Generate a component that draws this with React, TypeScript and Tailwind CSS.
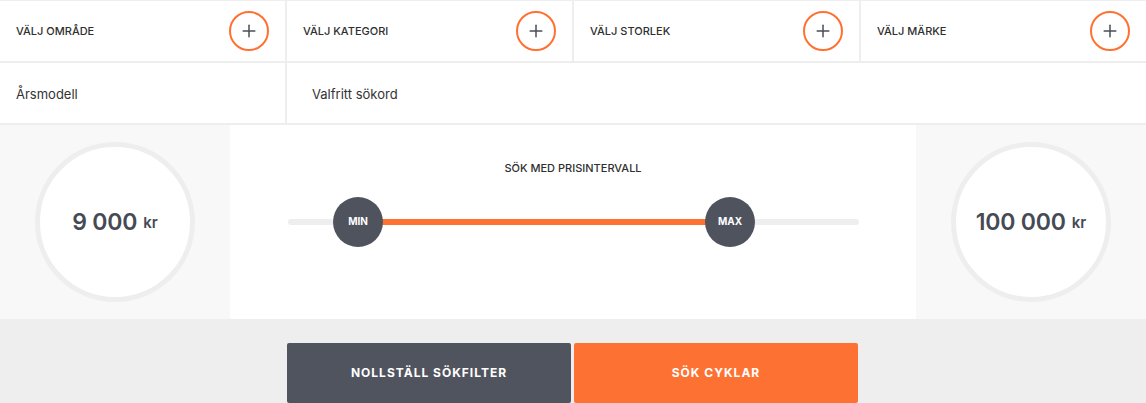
import { Plus } from 'lucide-react';

const filters = ['Välj område', 'Välj kategori', 'Välj storlek', 'Välj märke'];

function PriceCircle({ value }: { value: string }) {
  return (
    <div className="w-[230px] bg-[#f8f8f8] flex items-center justify-center">
      <div className="w-[160px] h-[160px] rounded-full bg-white border-[5px] border-[#eeeeee] flex items-center justify-center">
        <span className="text-[23px] font-semibold text-[#464a54] tracking-[-0.2px]">{value}</span>
        <span className="text-[15px] font-semibold text-[#464a54] ml-[6px] mt-[3px]">kr</span>
      </div>
    </div>
  );
}

export default function App() {
  return (
    <div className="w-[1146px] h-[403px] overflow-hidden bg-white font-['Inter',sans-serif] text-[#333]">
      <div className="border-t border-[#eeeeee] flex border-b-2">
        {filters.map((f, i) => (
          <div
            key={f}
            className={
              i < 3
                ? 'w-[287px] h-[60px] border-r-2 border-[#eeeeee] flex items-center justify-between pl-4 pr-4'
                : 'flex-1 h-[60px] flex items-center justify-between pl-4 pr-4'
            }
          >
            <span className="text-[11px] font-medium uppercase text-[#2f2f2f]">{f}</span>
            <div className="w-10 h-10 rounded-full border-2 border-[#ff7133] flex items-center justify-center text-[#4a4e58]">
              <Plus size={20} strokeWidth={1.8} />
            </div>
          </div>
        ))}
      </div>
      <div className="flex border-t-2 border-b-2 border-[#eeeeee] -mt-[2px]">
        <div className="w-[287px] h-[60px] border-r-2 border-[#eeeeee] flex items-center pl-4 pt-[3px]">
          <span className="text-[13px] text-[#333]">Årsmodell</span>
        </div>
        <div className="flex-1 h-[60px] flex items-center pl-[25px] pt-[3px]">
          <span className="text-[13px] text-[#333]">Valfritt sökord</span>
        </div>
      </div>
      <div className="flex h-[194px]">
        <PriceCircle value="9 000" />
        <div className="flex-1 flex flex-col items-center pt-[35px]">
          <span className="text-[11px] font-medium uppercase text-[#2f2f2f]">Sök med prisintervall</span>
          <div className="relative w-[571px] h-[6px] rounded-full bg-[#eeeeee] mt-[42px] ml-[1px]">
            <div className="absolute left-[70px] right-[128px] top-0 h-[6px] bg-[#ff7133]" />
            <div className="absolute left-[45px] -top-[22px] w-[50px] h-[50px] rounded-full bg-[#4f535e] flex items-center justify-center">
              <span className="text-[10px] font-bold text-white">MIN</span>
            </div>
            <div className="absolute left-[417px] -top-[22px] w-[50px] h-[50px] rounded-full bg-[#4f535e] flex items-center justify-center">
              <span className="text-[10px] font-bold text-white">MAX</span>
            </div>
          </div>
        </div>
        <PriceCircle value="100 000" />
      </div>
      <div className="bg-[#eeeeee] h-[84px] flex justify-center pt-[24px] gap-[3px] pr-[1px]">
        <button className="w-[284px] h-[60px] bg-[#50545e] rounded-[2px] text-white text-[12px] font-bold uppercase tracking-[1px]">
          Nollställ sökfilter
        </button>
        <button className="w-[284px] h-[60px] bg-[#fd7233] rounded-[2px] text-white text-[12px] font-bold uppercase tracking-[1px]">
          Sök cyklar
        </button>
      </div>
    </div>
  );
}
